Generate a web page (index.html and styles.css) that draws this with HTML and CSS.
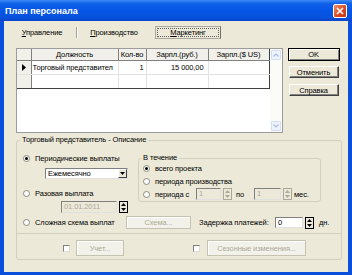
FILE: index.html
```html
<!DOCTYPE html>
<html lang="ru">
<head>
  <meta charset="UTF-8">
  <title>План персонала</title>
  <link rel="stylesheet" href="styles.css">
</head>
<body>
  <div class="window">
    <!-- Заголовок окна -->
    <div class="titlebar">
      <span class="title">План персонала</span>
      <span class="close">
        <svg width="8" height="8" viewBox="0 0 8 8"><path d="M1 1L7 7M7 1L1 7" stroke="#fff" stroke-width="1.6"/></svg>
      </span>
    </div>

    <div class="client">
      <!-- Вкладки -->
      <div class="tabs">
        <span class="tab tab-1"><u>У</u>правление</span>
        <span class="tab-sep"></span>
        <span class="tab tab-2"><u>П</u>роизводство</span>
        <span class="tab tab-3 active"><span class="focus"><u>М</u>аркетинг</span></span>
      </div>

      <div class="top">
        <!-- Таблица должностей -->
        <div class="grid">
          <table>
            <colgroup>
              <col class="c-fix"><col class="c-pos"><col class="c-qty"><col class="c-rub"><col class="c-usd">
            </colgroup>
            <thead>
              <tr>
                <th class="fixed"></th>
                <th>Должность</th>
                <th>Кол-во</th>
                <th>Зарпл.(руб.)</th>
                <th class="last">Зарпл.($ US)</th>
              </tr>
            </thead>
            <tbody>
              <tr>
                <td class="fixed"><svg width="4" height="7" viewBox="0 0 4 7"><path d="M0 0L4 3.5L0 7Z" fill="#000"/></svg></td>
                <td>Торговый представител</td>
                <td class="num">1</td>
                <td class="num rub">15 000,00</td>
                <td class="last"></td>
              </tr>
              <tr class="bottom">
                <td class="fixed"></td>
                <td></td>
                <td></td>
                <td></td>
                <td class="last"></td>
              </tr>
            </tbody>
          </table>
          <div class="scrollbar">
            <span class="arrow"><svg width="6" height="4" viewBox="0 0 6 4"><path d="M0.5 3.5L3 1L5.5 3.5" fill="none" stroke="#a9bde8" stroke-width="1.2"/></svg></span>
            <span class="arrow"><svg width="6" height="4" viewBox="0 0 6 4"><path d="M0.5 0.5L3 3L5.5 0.5" fill="none" stroke="#a9bde8" stroke-width="1.2"/></svg></span>
          </div>
        </div>

        <!-- Кнопки диалога -->
        <div class="buttons">
          <button class="btn default">OK</button>
          <button class="btn">Отменить</button>
          <button class="btn">Справка</button>
        </div>
      </div>

      <!-- Описание -->
      <fieldset class="group">
        <legend>Торговый представитель - Описание</legend>

        <div class="row-a">
          <div class="left-col">
            <label class="opt"><span class="radio checked"></span>Периодические выплаты</label>
            <div class="combo">
              <span class="combo-text">Ежемесячно</span>
              <span class="combo-btn"><svg width="5" height="3" viewBox="0 0 5 3"><path d="M0 0H5L2.5 3Z" fill="#000"/></svg></span>
            </div>
            <label class="opt opt-2"><span class="radio"></span>Разовая выплата</label>
            <div class="date-row">
              <span class="field disabled date">01.01.2011</span>
              <span class="spin dark">
                <svg width="5" height="3" viewBox="0 0 5 3"><path d="M0 3H5L2.5 0Z" fill="#000"/></svg>
                <svg width="5" height="3" viewBox="0 0 5 3"><path d="M0 0H5L2.5 3Z" fill="#000"/></svg>
              </span>
            </div>
          </div>

          <fieldset class="period">
            <legend>В течение</legend>
            <label class="opt"><span class="radio checked"></span>всего проекта</label>
            <label class="opt opt-p"><span class="radio"></span>периода производства</label>
            <div class="range-row">
              <label class="opt range-label"><span class="radio"></span>периода с</label>
              <span class="field disabled small">1</span>
              <span class="spin">
                <svg width="5" height="3" viewBox="0 0 5 3"><path d="M0 3H5L2.5 0Z" fill="#aca899"/></svg>
                <svg width="5" height="3" viewBox="0 0 5 3"><path d="M0 0H5L2.5 3Z" fill="#aca899"/></svg>
              </span>
              <span class="po">по</span>
              <span class="field disabled small wide">1</span>
              <span class="spin">
                <svg width="5" height="3" viewBox="0 0 5 3"><path d="M0 3H5L2.5 0Z" fill="#aca899"/></svg>
                <svg width="5" height="3" viewBox="0 0 5 3"><path d="M0 0H5L2.5 3Z" fill="#aca899"/></svg>
              </span>
              <span class="mes">мес.</span>
            </div>
          </fieldset>
        </div>

        <div class="row-b">
          <label class="opt opt-3"><span class="radio"></span>Сложная схема выплат</label>
          <button class="btn flat disabled schema">Схема...</button>
          <span class="delay-label">Задержка платежей:</span>
          <span class="field delay">0</span>
          <span class="spin dark">
            <svg width="5" height="3" viewBox="0 0 5 3"><path d="M0 3H5L2.5 0Z" fill="#000"/></svg>
            <svg width="5" height="3" viewBox="0 0 5 3"><path d="M0 0H5L2.5 3Z" fill="#000"/></svg>
          </span>
          <span class="dn">дн.</span>
        </div>

        <div class="divider"></div>

        <div class="row-c">
          <span class="check first"></span>
          <button class="btn flat disabled uchet">Учет...</button>
          <span class="check second"></span>
          <button class="btn flat disabled season">Сезонные изменения...</button>
        </div>
      </fieldset>
    </div>
  </div>
</body>
</html>
```

FILE: styles.css
```css
* {
  box-sizing: border-box;
}
body {
  margin: 0;
  font-family: "Liberation Sans", Arial, sans-serif;
  font-size: 7.5px;
  letter-spacing: -0.1px;
  color: #000;
}
.window {
  width: 352px;
  height: 275px;
  display: flex;
  flex-direction: column;
  background: #0a4fdc;
}
.titlebar {
  height: 21px;
  flex: none;
  display: flex;
  align-items: center;
  justify-content: space-between;
  padding: 0 5px 0 5px;
  background: linear-gradient(#3d8af7 0%, #0f5fe8 18%, #0556e6 50%, #0652de 82%, #0a45c8 100%);
}
.title {
  color: #fff;
  font-weight: bold;
  font-size: 9px;
  letter-spacing: 0;
}
.close {
  width: 14px;
  height: 14px;
  display: flex;
  align-items: center;
  justify-content: center;
  border: 1px solid #fff;
  border-radius: 2px;
  background: linear-gradient(135deg, #f0906a, #d8461e 60%, #c43a16);
}
.client {
  flex: 1;
  margin: 0 4px 3px 4px;
  background: #ece9d8;
  padding: 5px 6px 0 12px;
}

/* Вкладки */
.tabs {
  display: flex;
  align-items: center;
  height: 13px;
  margin-left: -2px;
}
.tab {
  height: 13px;
  line-height: 13px;
  text-align: center;
  white-space: nowrap;
}
.tab-1 { width: 56px; }
.tab-2 { width: 62px; }
.tab-3 { width: 66px; margin-left: 10px; }
.tab-sep {
  width: 1px;
  height: 11px;
  margin: 0 6px;
  background: #a0a0a0;
  box-shadow: 1px 0 #fff;
}
.tab.active {
  border: 1px solid #a8a8a0;
  border-right-color: #707070;
  padding: 1px;
}
.focus {
  display: flex;
  align-items: center;
  justify-content: center;
  height: 100%;
  line-height: 8px;
  border: 1px dotted #606060;
}

/* Таблица */
.top {
  display: flex;
  margin-top: 9px;
}
.grid {
  width: 267px;
  height: 85px;
  border: 1px solid #9c9c9c;
  background: #fff;
  display: flex;
  align-items: flex-start;
}
table {
  border-collapse: collapse;
  table-layout: fixed;
  width: 252px;
}
.c-fix { width: 14px; }
.c-pos { width: 87px; }
.c-qty { width: 28px; }
.c-rub { width: 62px; }
.c-usd { width: 61px; }
th {
  height: 11px;
  padding: 0;
  font-weight: normal;
  background: #f1f0ea;
  border-right: 1px solid #808080;
  border-bottom: 1px solid #808080;
  white-space: nowrap;
  overflow: hidden;
}
td {
  height: 14px;
  padding: 0 1px;
  border-right: 1px solid #e2e2e2;
  border-bottom: 1px solid #e2e2e2;
  white-space: nowrap;
  overflow: hidden;
}
td.fixed, th.fixed {
  background: #f1f0ea;
  border-right: 1px solid #808080;
  text-align: center;
  padding: 0;
}
td.fixed svg {
  display: block;
  margin: 0 auto;
}
td.num {
  text-align: right;
  padding-right: 2px;
}
td.rub {
  padding-right: 4px;
}
.last {
  border-right: 1px solid #404040;
}
tr.bottom td {
  border-bottom: 1px solid #404040;
}
.scrollbar {
  margin-left: auto;
  width: 12px;
  height: 83px;
  display: flex;
  flex-direction: column;
  justify-content: space-between;
  padding: 1px 1px;
  background: #fbfbf8;
}
.arrow {
  width: 10px;
  height: 10px;
  display: flex;
  align-items: center;
  justify-content: center;
  border: 1px solid #d2ddf6;
  border-radius: 1px;
  background: #eef3fd;
}

/* Кнопки */
.buttons {
  width: 53px;
  margin-left: 4px;
  display: flex;
  flex-direction: column;
  align-items: center;
}
.btn {
  width: 50px;
  height: 12px;
  padding: 0;
  font: inherit;
  letter-spacing: inherit;
  color: #000;
  background: #ece9d8;
  border: 1px solid;
  border-color: #fff #404040 #404040 #fff;
  box-shadow: inset -1px -1px #808080;
  line-height: 9px;
}
.btn.default {
  width: 52px;
  height: 13px;
  border-color: #000;
  box-shadow: inset 1px 1px #fff, inset -1px -1px #808080;
}
.buttons .btn + .btn {
  margin-top: 5px;
}
.buttons .btn:last-child {
  margin-top: 6px;
}
.btn.flat {
  border: 1px solid #c5c2b2;
  box-shadow: inset 1px 1px #fff;
  background: #f3f2ea;
}
.btn.disabled {
  color: #aca899;
}

/* Группа */
.group {
  margin: 2px 0 0 0;
  padding: 0 0 3px 0;
  width: 326px;
  border: 1px solid #d0d0bf;
  border-radius: 3px;
}
legend {
  margin-left: 3px;
  padding: 0 2px;
  line-height: 10px;
}
.row-a {
  display: flex;
  margin-top: 8px;
}
.left-col {
  width: 121px;
  padding-left: 6px;
  display: flex;
  flex-direction: column;
}
.opt {
  display: flex;
  align-items: center;
  height: 10px;
  white-space: nowrap;
}
.radio {
  width: 7px;
  height: 7px;
  margin-right: 5px;
  flex: none;
  border-radius: 50%;
  border: 1px solid #8a8a80;
  background: #fff;
  display: flex;
  align-items: center;
  justify-content: center;
}
.radio.checked::after {
  content: "";
  width: 3px;
  height: 3px;
  border-radius: 50%;
  background: #000;
}
.combo {
  width: 83px;
  height: 11px;
  margin: 5px 0 0 22px;
  display: flex;
  background: #fff;
  border: 1px solid;
  border-color: #808080 #e0e0e0 #e0e0e0 #808080;
}
.combo-text {
  flex: 1;
  padding-left: 2px;
  line-height: 9px;
}
.combo-btn {
  width: 9px;
  display: flex;
  align-items: center;
  justify-content: center;
  background: #ece9d8;
  border: 1px solid;
  border-color: #fff #404040 #404040 #fff;
}
.opt-2 {
  margin-top: 9px;
}
.date-row {
  display: flex;
  margin: 3px 0 0 38px;
}
.field {
  height: 12px;
  line-height: 10px;
  padding-left: 2px;
  background: #fff;
  border: 1px solid;
  border-color: #808080 #e0e0e0 #e0e0e0 #808080;
}
.field.disabled {
  background: #ece9d8;
  color: #aca899;
}
.field.date {
  width: 56px;
}
.spin {
  width: 9px;
  height: 12px;
  margin-left: 2px;
  display: flex;
  flex-direction: column;
  align-items: center;
  justify-content: space-around;
  border: 1px solid #aca899;
}
.spin.dark {
  border-color: #000;
}
.period {
  width: 183px;
  margin: 0;
  padding: 0 0 1px 4px;
  border: 1px solid #d0d0bf;
  border-radius: 3px;
  align-self: flex-start;
}
.period legend {
  margin-left: -2px;
}
.opt-p {
  margin-top: 3px;
}
.range-row {
  display: flex;
  align-items: center;
  height: 12px;
  margin-top: 2px;
}
.range-label {
  width: 53px;
}
.field.small {
  width: 25px;
}
.field.small.wide {
  width: 27px;
}
.po {
  margin: 0 10px 0 4px;
}
.mes {
  margin-left: 2px;
}
.row-b {
  display: flex;
  align-items: center;
  height: 13px;
  margin-top: 3px;
  padding-left: 6px;
}
.opt-3 {
  width: 103px;
}
.btn.schema {
  width: 65px;
  height: 13px;
}
.delay-label {
  margin-left: 8px;
  width: 76px;
  white-space: nowrap;
}
.field.delay {
  width: 28px;
  height: 11px;
  line-height: 9px;
}
.dn {
  margin-left: 5px;
}
.divider {
  margin-top: 4px;
  border-top: 1px solid #d0d0bf;
}
.row-c {
  display: flex;
  align-items: center;
  height: 16px;
  margin-top: 6px;
}
.check {
  width: 7px;
  height: 7px;
  background: #fff;
  border: 1px solid;
  border-color: #808080 #dcdcdc #dcdcdc #808080;
}
.check.first {
  margin-left: 46px;
}
.check.second {
  margin-left: 69px;
}
.btn.uchet {
  width: 48px;
  height: 16px;
  margin-left: 6px;
}
.btn.season {
  width: 99px;
  height: 16px;
  margin-left: 7px;
}
```
